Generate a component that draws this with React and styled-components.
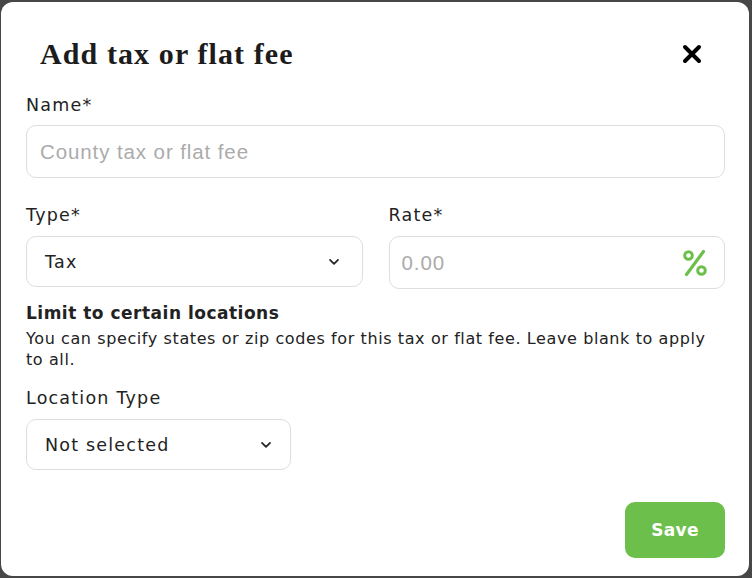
import React, { useState } from "react";
import styled, { createGlobalStyle } from "styled-components";

const GlobalStyle = createGlobalStyle`
  html, body {
    margin: 0;
    padding: 0;
    background-color: #474747;
  }
  * {
    box-sizing: border-box;
  }
`;

const Backdrop = styled.div`
  height: 578px;
  padding: 2px 3px 2px 1px;
`;

const Modal = styled.div`
  height: 100%;
  background-color: #fff;
  border-radius: 12px;
  padding: 34px 24px 0 25px;
  display: flex;
  flex-direction: column;
  font-family: "DejaVu Sans", sans-serif;
  color: #222;
`;

const Header = styled.div`
  display: flex;
  align-items: center;
  justify-content: space-between;
  padding: 0 23px 0 14px;
  height: 36px;
`;

const Title = styled.h2`
  margin: 0;
  font-family: "Liberation Serif", serif;
  font-weight: 700;
  font-size: 30px;
  color: #1c1c1c;
  letter-spacing: 1.1px;
`;

const CloseButton = styled.button`
  border: none;
  background: none;
  padding: 0;
  display: flex;
  cursor: pointer;
`;

const Label = styled.div`
  font-size: 17.5px;
  line-height: 22px;
  letter-spacing: 1.2px;
  color: #222;
  margin-top: ${(p) => p.$top || 0}px;
  margin-bottom: ${(p) => p.$bottom || 9}px;
`;

const Field = styled.div`
  display: flex;
  align-items: center;
  height: ${(p) => p.$height || 53}px;
  width: ${(p) => (p.$width ? `${p.$width}px` : "100%")};
  border: 1px solid #dedede;
  border-radius: 10px;
  padding: ${(p) => p.$pad || "0 13px"};
  background: #fff;
`;

const Input = styled.input`
  flex: 1;
  min-width: 0;
  border: none;
  outline: none;
  font-family: "Liberation Sans", sans-serif;
  font-size: 20.5px;
  letter-spacing: 0.9px;
  color: #222;
  padding: 0;
  background: transparent;
  &::placeholder {
    color: #ababab;
  }
`;

const SelectText = styled.span`
  flex: 1;
  font-size: 17.5px;
  letter-spacing: 1.2px;
  color: #222;
`;

const Row = styled.div`
  display: grid;
  grid-template-columns: 1fr 1fr;
  column-gap: 26px;
  margin-top: 26px;
`;

const Column = styled.div`
  display: flex;
  flex-direction: column;
`;

const SectionTitle = styled.div`
  font-size: 17px;
  font-weight: 700;
  line-height: 22px;
  letter-spacing: 0.5px;
  margin-top: 13px;
`;

const Description = styled.p`
  margin: 4px 0 0;
  font-size: 16px;
  line-height: 21px;
  letter-spacing: 0.6px;
  color: #222;
  max-width: 690px;
`;

const Footer = styled.div`
  display: flex;
  justify-content: flex-end;
  margin-top: 32px;
`;

const SaveButton = styled.button`
  width: 100px;
  height: 56px;
  border: none;
  border-radius: 10px;
  background-color: #6dbf4b;
  color: #fff;
  font-family: "DejaVu Sans", sans-serif;
  font-weight: 700;
  font-size: 17px;
  letter-spacing: 0.3px;
  cursor: pointer;
`;

const Chevron = () => (
  <svg width="12" height="8" viewBox="0 0 12 8" fill="none">
    <path d="M2 1.8 L6 5.8 L10 1.8" stroke="#222" strokeWidth="1.7" strokeLinecap="round" strokeLinejoin="round" />
  </svg>
);

const CloseIcon = () => (
  <svg width="20" height="20" viewBox="0 0 20 20">
    <path d="M3 3 L17 17 M17 3 L3 17" stroke="#000" strokeWidth="4" strokeLinecap="round" />
  </svg>
);

const PercentIcon = () => (
  <svg width="26" height="28" viewBox="0 0 26 28" fill="none">
    <circle cx="6.5" cy="6.5" r="3.8" stroke="#6dbf4b" strokeWidth="3" />
    <circle cx="19.5" cy="21.5" r="3.8" stroke="#6dbf4b" strokeWidth="3" />
    <path d="M21.5 2.5 L4.5 25.5" stroke="#6dbf4b" strokeWidth="3.2" strokeLinecap="round" />
  </svg>
);

const App = () => {
  const [name, setName] = useState("");
  const [rate, setRate] = useState("");

  return (
    <>
      <GlobalStyle />
      <Backdrop>
        <Modal>
          <Header>
            <Title>Add tax or flat fee</Title>
            <CloseButton aria-label="Close">
              <CloseIcon />
            </CloseButton>
          </Header>

          <Label $top={22}>Name*</Label>
          <Field>
            <Input
              placeholder="County tax or flat fee"
              value={name}
              onChange={({ target: { value } }) => setName(value)}
            />
          </Field>

          <Row>
            <Column>
              <Label $bottom={10}>Type*</Label>
              <Field $height={51} $pad="0 22px 0 18px">
                <SelectText>Tax</SelectText>
                <Chevron />
              </Field>
            </Column>
            <Column>
              <Label $bottom={10}>Rate*</Label>
              <Field $pad="0 16px 0 12px">
                <Input
                  placeholder="0.00"
                  value={rate}
                  onChange={({ target: { value } }) => setRate(value)}
                />
                <PercentIcon />
              </Field>
            </Column>
          </Row>

          <SectionTitle>Limit to certain locations</SectionTitle>
          <Description>
            You can specify states or zip codes for this tax or flat fee. Leave blank to apply to all.
          </Description>

          <Label $top={17} $bottom={10}>Location Type</Label>
          <Field $height={51} $width={265} $pad="0 18px 0 18px">
            <SelectText>Not selected</SelectText>
            <Chevron />
          </Field>

          <Footer>
            <SaveButton>Save</SaveButton>
          </Footer>
        </Modal>
      </Backdrop>
    </>
  );
};

export default App;
